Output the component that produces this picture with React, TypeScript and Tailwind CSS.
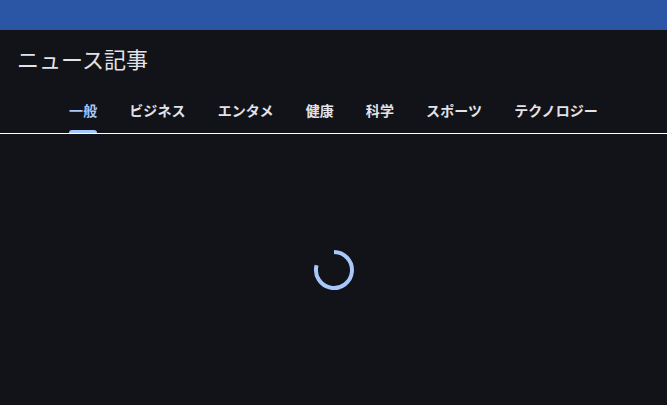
import React from 'react';

const tabs = ['一般', 'ビジネス', 'エンタメ', '健康', '科学', 'スポーツ', 'テクノロジー'];

const Spinner = () => (
    <svg width="44" height="44" viewBox="0 0 44 44" className="block">
        {/* arc from 12 o'clock clockwise to ~9:30 */}
        <path
            d="M22 4 A18 18 0 1 1 4.6 17.3"
            fill="none"
            stroke="#a8c7fa"
            strokeWidth="4"
        />
    </svg>
);

export default function App() {
    return (
        <div className="w-[667px] h-[405px] bg-[#111318] flex flex-col overflow-hidden" style={{ fontFamily: '"Noto Sans CJK JP", "Noto Sans", sans-serif' }}>
            {/* Status bar */}
            <div className="h-[30px] bg-[#2b56a5] shrink-0" />

            {/* Header */}
            <div className="h-[60px] flex items-center px-[17px] pb-[4px] shrink-0">
                <h1 className="text-[22px] leading-none text-[#e2e2e9] font-normal">ニュース記事</h1>
            </div>

            {/* Tabs */}
            <div className="border-b border-white shrink-0">
                <div className="flex justify-center">
                    {tabs.map((t, i) => (
                        <div key={t} className="px-4 h-[43px] flex flex-col items-center justify-end">
                            <span className={i === 0 ? 'text-[14px] leading-none font-bold tracking-[0.1px] text-[#a8c7fa]' : 'text-[14px] leading-none font-bold tracking-[0.1px] text-[#e2e2e9]'}>{t}</span>
                            <div className={i === 0 ? 'mt-[13px] h-[3px] w-full rounded-t-[3px] bg-[#a8c7fa]' : 'mt-[13px] h-[3px] w-full'} />
                        </div>
                    ))}
                </div>
            </div>

            {/* Content */}
            <div className="flex-1 flex items-center justify-center">
                <Spinner />
            </div>
        </div>
    );
}
